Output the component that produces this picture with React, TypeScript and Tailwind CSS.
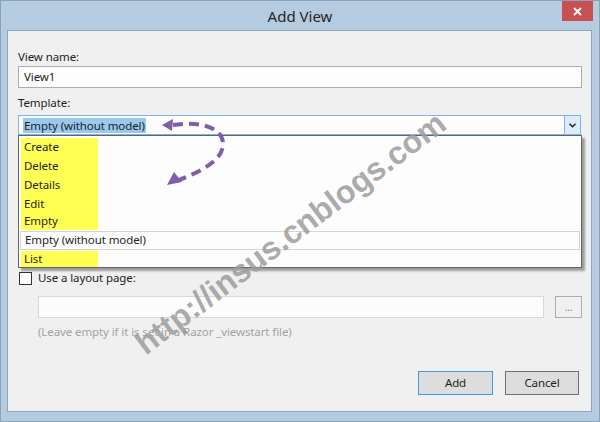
import React from "react";

const items = ["Create", "Delete", "Details", "Edit", "Empty"];

function Chevron() {
  return (
    <svg width="7" height="5" viewBox="0 0 7 5">
      <path d="M0.5 0.8 L3.5 3.8 L6.5 0.8" fill="none" stroke="#1e1e1e" strokeWidth="1.4" />
    </svg>
  );
}

export default function App() {
  const ui = { fontFamily: '"Segoe UI", "Noto Sans", sans-serif' };

  return (
    <div
      className="relative w-[600px] h-[422px] overflow-hidden bg-[#b5cbe0] border border-[#8ba2bb] flex flex-col"
      style={ui}
    >
      {/* TITLE BAR */}
      <div className="relative h-[29px] shrink-0 flex items-center justify-center">
        <span className="text-[15px] text-[#262626] mt-[1px]">Add View</span>
        <div className="absolute right-[6px] top-0 w-[31px] h-[20px] bg-[#c75050] flex items-center justify-center">
          <svg width="9" height="9" viewBox="0 0 9 9">
            <path d="M1 1 L8 8 M8 1 L1 8" stroke="#fff" strokeWidth="1.8" />
          </svg>
        </div>
      </div>

      {/* CLIENT AREA */}
      <div className="ml-[6px] mr-[7px] h-[382px] bg-[#f0f0f0] border border-[#8fa6bf] pl-[10px] pr-[9px] pt-[18px] flex flex-col text-[11.5px] tracking-[-0.1px] text-[#1e1e1e]">
        <label className="leading-[16px]">View name:</label>
        <div className="mt-[1px] h-[22px] bg-[#fdfdfd] border border-[#abadb3] flex items-center pl-[5px]">
          View1
        </div>

        <label className="mt-[7px] leading-[16px]">Template:</label>
        <div className="relative mt-[4px]">
          <div className="h-[20px] mr-[1px] bg-[#fdfdfd] border border-[#7eb4ea] flex items-center">
            <span className="ml-[4px] bg-[#99c9ef] leading-[15px] px-[1px]">Empty (without model)</span>
            <div className="ml-auto w-[16px] h-full bg-[#dcecfc] border-l border-[#7eb4ea] flex items-center justify-center">
              <Chevron />
            </div>
          </div>

          {/* DROPDOWN LIST */}
          <div className="absolute left-0 right-0 top-full z-10 h-[133px] bg-[#fdfdfd] border border-[#646464] shadow-[3px_3px_2px_rgba(0,0,0,0.35)] pt-[2px]">
            {items.map((it, i) => (
              <div key={it} className={`${i === 4 ? "h-[17px]" : "h-[19px]"} pl-[2px]`}>
                <div className={`w-[77px] ${i === 4 ? "h-[16px]" : "h-[19px]"} bg-[#ffff54] flex items-center pl-[3px] pb-[2px]`}>{it}</div>
              </div>
            ))}
            <div className="h-[19px] mx-[1px] border border-[#d4d4d4] flex items-center pl-[4px] pb-[1px]">
              Empty (without model)
            </div>
            <div className="h-[19px] pl-[2px] pt-[1px]">
              <div className="w-[77px] h-[16px] bg-[#ffff54] flex items-center pl-[3px] pb-[1px]">List</div>
            </div>
          </div>
        </div>

        {/* LAYOUT PAGE */}
        <div className="mt-[135px] h-[16px] flex items-center gap-[6px]">
          <div className="ml-[1px] w-[13px] h-[13px] bg-white border border-[#333]" />
          <span>Use a layout page:</span>
        </div>
        <div className="mt-[10px] ml-[20px] flex gap-[11px]">
          <div className="w-[506px] h-[22px] bg-[#fcfcfc] border border-[#d9d9d9]" />
          <div className="w-[27px] h-[22px] border border-[#adadad] bg-[#f0f0f0] flex items-end justify-center pb-[5px] text-[10px] leading-none text-[#6a8aa8]">
            ...
          </div>
        </div>
        <div className="mt-[6px] ml-[20px] leading-[16px] text-[#a3a3a3]">
          (Leave empty if it is set in a Razor _viewstart file)
        </div>

        {/* BUTTONS */}
        <div className="mt-[31px] flex justify-end gap-[12px] pr-[3px]">
          <button className="w-[75px] h-[24px] bg-[#dddddd] border border-[#3c9ae6]">Add</button>
          <button className="w-[74px] h-[24px] bg-[#dddddd] border border-[#707070]">Cancel</button>
        </div>
      </div>

      {/* WATERMARK */}
      <div
        className="absolute left-[100px] top-[208px] z-20 whitespace-nowrap text-[32px] font-bold text-[#9c9c9c]/85 -rotate-[37deg] pointer-events-none"
        style={{ fontFamily: '"Liberation Sans", Arial, sans-serif' }}
      >
        http://insus.cnblogs.com
      </div>

      {/* ARROW */}
      <svg className="absolute left-0 top-0 z-30 pointer-events-none" width="600" height="422" viewBox="0 0 600 422">
        <path
          d="M172 124 C198 120 222 126 222 143 C222 160 198 171 178 179"
          fill="none"
          stroke="#7d5fa8"
          strokeWidth="4"
          strokeDasharray="10 6"
        />
        <path d="M161 124 L172 118 L171 130 Z" fill="#7d5fa8" />
        <path d="M166 184 L173 171 L181 181 Z" fill="#7d5fa8" />
      </svg>
    </div>
  );
}
